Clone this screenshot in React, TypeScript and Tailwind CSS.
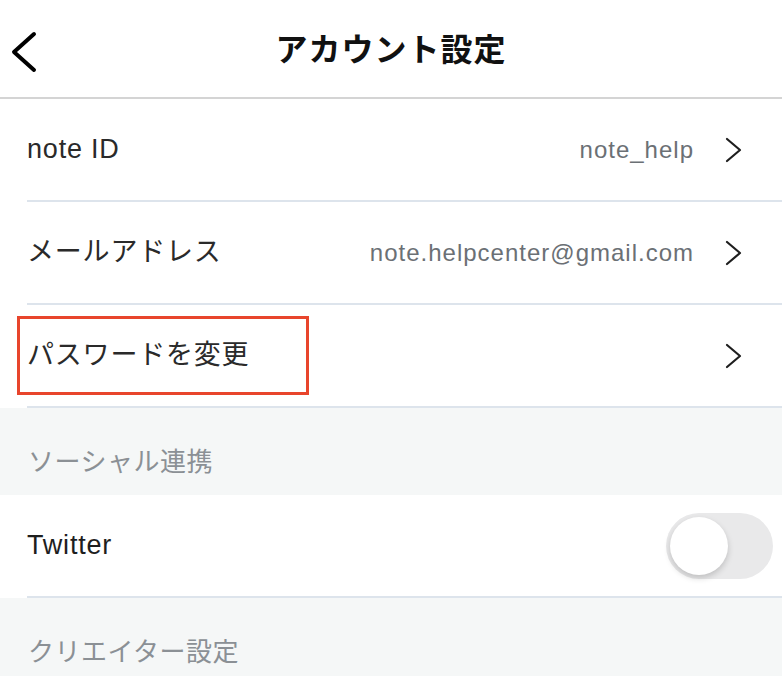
const FONT = "font-['Liberation_Sans','Noto_Sans_CJK_JP',sans-serif]";

type Row = { label: string; value?: string; boxed?: boolean };

const ACCOUNT_ROWS: Row[] = [
  { label: "note ID", value: "note_help" },
  { label: "メールアドレス", value: "note.helpcenter@gmail.com" },
  { label: "パスワードを変更", boxed: true },
];

function Chevron() {
  return (
    <svg width="20" height="26" viewBox="0 0 20 26" className="shrink-0">
      <polyline points="3,2 16,13 3,24" fill="none" stroke="#1e1e1e" strokeWidth="2.2" strokeLinecap="round" strokeLinejoin="round" />
    </svg>
  );
}

function LinkRow({ label, value, boxed }: Row) {
  return (
    <div className="relative pl-[27px] bg-white">
      <div className="flex h-[103px] items-center border-b-2 border-[#dde4ec] pr-[38px]">
        <span className="text-[27px] text-[#2a2a2a] tracking-[0.8px]">{label}</span>
        <span className="ml-auto mr-[30px] text-[24px] text-[#6b7075] tracking-[1px]">{value}</span>
        <Chevron />
      </div>
      {boxed && (
        <div className="absolute left-[17px] top-[11px] w-[292px] h-[79px] border-[3px] border-[#e8452c]" />
      )}
    </div>
  );
}

function SectionHeader({ title, height }: { title: string; height: string }) {
  return (
    <div className={`bg-[#f5f7f7] pl-[28px] pt-[36px] ${height}`}>
      <span className="block text-[26px] leading-[36px] text-[#8b9095] tracking-[0.5px]">{title}</span>
    </div>
  );
}

export default function App() {
  return (
    <div className={`w-[782px] h-[676px] overflow-hidden bg-white ${FONT}`}>
      <header className="relative flex h-[99px] items-center justify-center border-b-2 border-[#d4d4d4]">
        <svg width="30" height="42" viewBox="0 0 30 42" className="absolute left-[9px] top-[31px]">
          <polyline points="25,3 5,21 25,39" fill="none" stroke="#000" strokeWidth="4" strokeLinecap="round" strokeLinejoin="round" />
        </svg>
        <h1 className="text-[32px] font-bold text-[#111] tracking-[1px] mt-[2px]">アカウント設定</h1>
      </header>

      {ACCOUNT_ROWS.map((row) => (
        <LinkRow key={row.label} {...row} />
      ))}

      <SectionHeader title="ソーシャル連携" height="h-[87px]" />

      <div className="pl-[27px] bg-white">
        <div className="flex h-[103px] items-center border-b-2 border-[#dde4ec] pr-[9px]">
          <span className="text-[27px] text-[#1e1e1e] tracking-[0.8px]">Twitter</span>
          <div className="ml-auto w-[107px] h-[66px] rounded-full bg-[#e9e9ea] p-[4px]">
            <div className="w-[58px] h-[58px] rounded-full bg-white shadow-[0_3px_6px_rgba(0,0,0,0.18)]" />
          </div>
        </div>
      </div>

      <SectionHeader title="クリエイター設定" height="h-[78px]" />
    </div>
  );
}
